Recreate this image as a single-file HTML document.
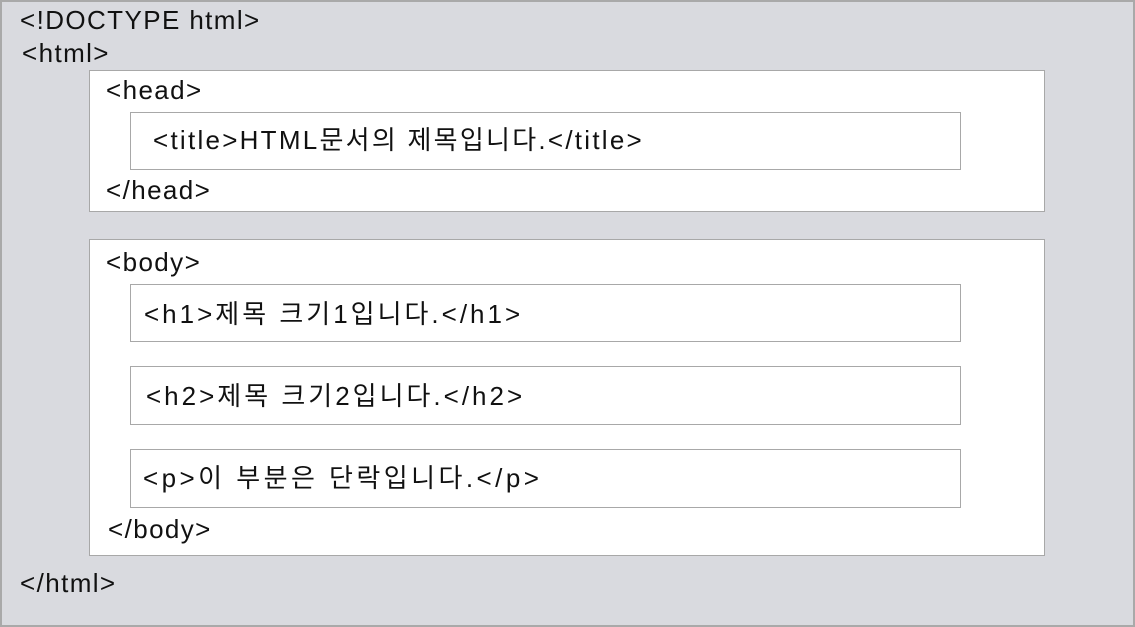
<!DOCTYPE html>
<html><head><meta charset="utf-8"><style>
*{margin:0;padding:0;box-sizing:border-box}
body{width:1135px;height:627px;position:relative;overflow:hidden;background:#d9dadf;font-family:"Liberation Sans","Noto Sans CJK KR",sans-serif;font-size:26px;color:#111}
.frame{position:absolute;left:0;top:0;width:1135px;height:627px;border:2px solid #a9a9a9}
.box{position:absolute;background:#fff;border:1px solid #a8a8a8}
.t{position:absolute;line-height:28px;white-space:nowrap;letter-spacing:1.4px}
</style></head><body>
<div class="frame"></div>
<div class="box" style="left:89px;top:70px;width:956px;height:142px"></div>
<div class="box" style="left:130px;top:112px;width:831px;height:58px"></div>
<div class="box" style="left:89px;top:239px;width:956px;height:317px"></div>
<div class="box" style="left:130px;top:284px;width:831px;height:58px"></div>
<div class="box" style="left:130px;top:366px;width:831px;height:59px"></div>
<div class="box" style="left:130px;top:449px;width:831px;height:59px"></div>
<div class="t" style="left:20px;top:6px">&lt;!DOCTYPE html&gt;</div>
<div class="t" style="left:22px;top:39px">&lt;html&gt;</div>
<div class="t" style="left:106px;top:76px">&lt;head&gt;</div>
<div class="t" style="left:153px;top:126px;letter-spacing:2.26px">&lt;title&gt;HTML문서의 제목입니다.&lt;/title&gt;</div>
<div class="t" style="left:144px;top:300px;letter-spacing:3px">&lt;h1&gt;제목 크기1입니다.&lt;/h1&gt;</div>
<div class="t" style="left:106px;top:176px">&lt;/head&gt;</div>
<div class="t" style="left:106px;top:248px">&lt;body&gt;</div>
<div class="t" style="left:146px;top:382px;letter-spacing:3px">&lt;h2&gt;제목 크기2입니다.&lt;/h2&gt;</div>
<div class="t" style="left:143px;top:464px;letter-spacing:3.45px">&lt;p&gt;이 부분은 단락입니다.&lt;/p&gt;</div>
<div class="t" style="left:108px;top:515px">&lt;/body&gt;</div>
<div class="t" style="left:20px;top:569px">&lt;/html&gt;</div>
</body></html>
